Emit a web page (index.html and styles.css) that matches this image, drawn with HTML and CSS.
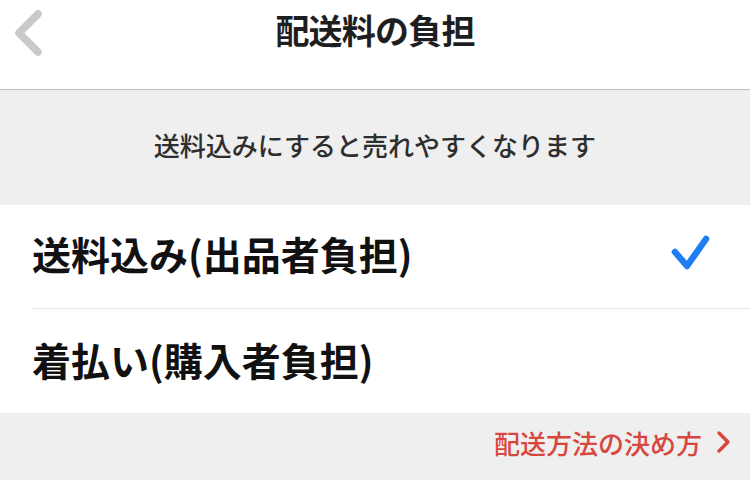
FILE: index.html
```html
<!DOCTYPE html>
<html lang="ja">
<head>
<meta charset="utf-8">
<link rel="stylesheet" href="styles.css">
</head>
<body>
<div class="screen">
  <header class="nav">
    <svg class="back" width="34" height="50" viewBox="0 0 34 50">
      <polyline points="27,6 8,25 27,44" fill="none" stroke="#c9c9c9" stroke-width="7.5" stroke-linecap="round" stroke-linejoin="round"/>
    </svg>
    <h1 class="title">配送料の負担</h1>
  </header>
  <div class="hint">送料込みにすると売れやすくなります</div>
  <ul class="options">
    <li class="option">
      <span class="label">送料込み(出品者負担)</span>
      <svg class="check" width="44" height="40" viewBox="0 0 44 40">
        <polyline points="7,19 19,33 38,6" fill="none" stroke="#1f7ef5" stroke-width="6.5" stroke-linecap="round" stroke-linejoin="round"/>
      </svg>
    </li>
    <li class="option">
      <span class="label">着払い(購入者負担)</span>
    </li>
  </ul>
  <div class="footer">
    <a class="link">配送方法の決め方
      <svg class="chev" width="16" height="24" viewBox="0 0 16 24">
        <polyline points="3,3 12,12 3,21" fill="none" stroke="#d8473d" stroke-width="3.4" stroke-linecap="round" stroke-linejoin="round"/>
      </svg>
    </a>
  </div>
</div>
</body>
</html>
```
FILE: styles.css
```css
* { box-sizing: border-box; }
html, body {
  margin: 0;
  padding: 0;
  background: #efefef;
}
body {
  font-family: "Noto Sans CJK JP", "Noto Sans", sans-serif;
}
.screen {
  width: 750px;
  height: 480px;
  overflow: hidden;
  background: #efefef;
}
.nav {
  position: relative;
  height: 90px;
  background: #ffffff;
  border-bottom: 1px solid #bdbdbd;
  display: flex;
  align-items: center;
  justify-content: center;
}
.back {
  position: absolute;
  left: 11px;
  top: 8px;
}
.title {
  margin: 0 0 30px 0;
  font-size: 34px;
  font-weight: 700;
  color: #1e1e1e;
  letter-spacing: -0.8px;
}
.hint {
  height: 115px;
  display: flex;
  align-items: center;
  justify-content: center;
  font-size: 26px;
  font-weight: 500;
  color: #2e2e2e;
  padding-bottom: 6px;
  letter-spacing: 0;
}
.options {
  list-style: none;
  margin: 0;
  padding: 0 0 0 32px;
  background: #ffffff;
}
.option {
  height: 104px;
  display: flex;
  align-items: center;
  justify-content: space-between;
  padding-right: 38px;
  border-bottom: 1px solid #e6e6e6;
}
.option:last-child {
  border-bottom: none;
  height: 104px;
}
.label {
  font-size: 39px;
  font-weight: 700;
  color: #111111;
  letter-spacing: 0;
  padding-bottom: 8px;
}
.option:last-child .label {
  padding-bottom: 4px;
}
.check {
  margin-bottom: 8px;
}
.footer {
  height: 66px;
  display: flex;
  align-items: center;
  justify-content: flex-end;
  padding-right: 18px;
  padding-bottom: 8px;
}
.link {
  display: flex;
  align-items: center;
  gap: 14px;
  font-size: 26px;
  font-weight: 500;
  color: #d8473d;
  letter-spacing: 0;
}
```
